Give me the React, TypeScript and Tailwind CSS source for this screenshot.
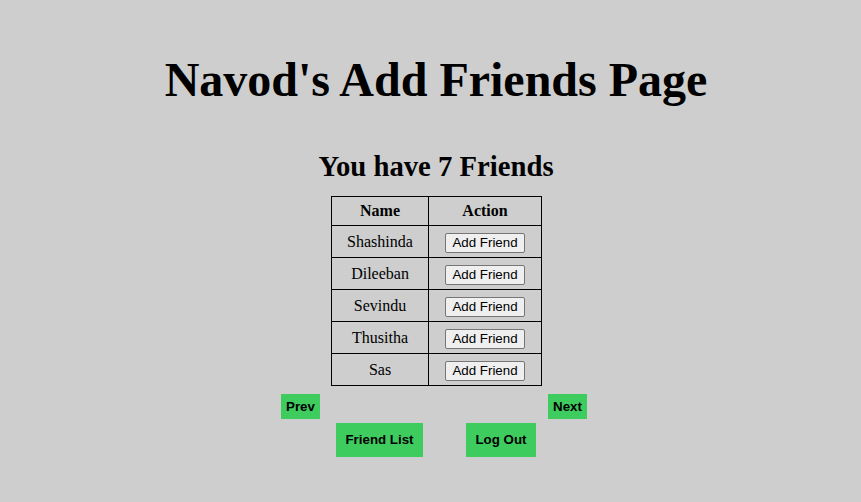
const friends = ["Shashinda", "Dileeban", "Sevindu", "Thusitha", "Sas"];

export default function App() {
  return (
    <div className="min-h-screen bg-[#cecece] flex flex-col items-center font-['Liberation_Serif',serif] text-black">
      <h1 className="mt-[52px] ml-[11px] text-[48px] leading-[56px] font-bold">Navod's Add Friends Page</h1>
      <h2 className="mt-[42px] ml-[11px] text-[28.7px] leading-[32px] font-bold">You have 7 Friends</h2>
      <table className="mt-[14px] ml-[12px] border-collapse border border-black text-base">
        <thead>
          <tr className="h-[29px]">
            <th className="w-[97px] border border-black font-bold">Name</th>
            <th className="w-[113px] border border-black font-bold">Action</th>
          </tr>
        </thead>
        <tbody>
          {friends.map((name) => (
            <tr key={name} className="h-[32px]">
              <td className="border border-black text-center">{name}</td>
              <td className="border border-black text-center">
                <button className="h-[20px] w-[80px] rounded-[2px] border border-[#767676] bg-[#efefef] font-['Liberation_Sans',sans-serif] text-[13.33px] leading-[18px]">
                  Add Friend
                </button>
              </td>
            </tr>
          ))}
        </tbody>
      </table>
      <div className="mt-[8px] ml-[7px] flex w-[306px] justify-between font-['Liberation_Sans',sans-serif] text-[13.33px] font-bold">
        <button className="h-[25px] w-[39px] bg-[#3ecc5f]">Prev</button>
        <button className="h-[25px] w-[39px] bg-[#3ecc5f]">Next</button>
      </div>
      <div className="mt-[4px] ml-[11px] flex gap-[43px] font-['Liberation_Sans',sans-serif] text-[13.33px] font-bold">
        <button className="h-[34px] w-[87px] bg-[#3ecc5f]">Friend List</button>
        <button className="h-[34px] w-[70px] bg-[#3ecc5f]">Log Out</button>
      </div>
    </div>
  );
}
